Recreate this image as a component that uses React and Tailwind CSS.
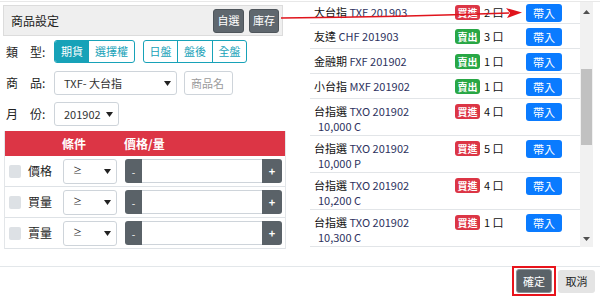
import React from 'react';

const rows = [
  { name: '大台指', code: 'TXF 201903', side: 'buy', qty: 2 },
  { name: '友達', code: 'CHF 201903', side: 'sell', qty: 3 },
  { name: '金融期', code: 'FXF 201902', side: 'sell', qty: 1 },
  { name: '小台指', code: 'MXF 201902', side: 'sell', qty: 1 },
  { name: '台指選', code: 'TXO 201902', sub: '10,000 C', side: 'buy', qty: 4 },
  { name: '台指選', code: 'TXO 201902', sub: '10,000 P', side: 'buy', qty: 5 },
  { name: '台指選', code: 'TXO 201902', sub: '10,200 C', side: 'buy', qty: 4 },
  { name: '台指選', code: 'TXO 201902', sub: '10,300 C', side: 'buy', qty: 1 },
];

function Caret() {
  return (
    <svg width="7" height="5" viewBox="0 0 7 5" className="shrink-0">
      <polygon points="0,0 7,0 3.5,5" fill="#222" />
    </svg>
  );
}

function Select({ value, className, small }) {
  return (
    <div className={`flex items-center justify-between h-full border border-[#ced4da] rounded-[3px] bg-white pl-[9px] pr-[5px] text-[#333] ${small ? 'text-[9px]' : 'text-[11px]'} ${className}`}>
      <span>{value}</span>
      <Caret />
    </div>
  );
}

function Condition({ label }) {
  return (
    <div className="flex items-center h-[31px] border-b border-[#dee2e6]">
      <div className="ml-[4px] w-[12px] h-[13px] rounded-[2px] bg-[#dde1e5]" />
      <div className="ml-[7px] w-[35px] text-[12px] text-[#222]">{label}</div>
      <div className="w-[54px] h-[25px]">
        <Select value="≥" small />
      </div>
      <div className="ml-[8px] w-[157px] h-[24px] flex">
        <div className="w-[17px] h-full bg-[#5a6268] rounded-l-[3px] text-white text-[10px] flex items-center justify-center">-</div>
        <div className="flex-1 h-full border-y border-[#ced4da] bg-white" />
        <div className="w-[20px] h-full bg-[#5a6268] rounded-r-[3px] text-white text-[11px] font-bold flex items-center justify-center">+</div>
      </div>
    </div>
  );
}

function ListRow({ r, first }) {
  const h = r.sub ? 'h-[37px]' : first ? 'h-[22px]' : 'h-[25px]';
  return (
    <div className={`flex items-start ${h} ${first ? 'pt-[3px]' : 'pt-[5px]'} pl-[4px] pr-[18px] border-b border-[#e2e5e8]`}>
      <div className="w-[141px] text-[11px] leading-[15px]">
        <div className="h-[15px]">
          <span className="text-[#111]">{r.name}</span>{' '}
          <span className="text-[#2e3360]">{r.code}</span>
        </div>
        {r.sub && <div className="h-[15px] pl-[4px] text-[#2e3360]">{r.sub}</div>}
      </div>
      <div className={`w-[25px] h-[15px] rounded-[3px] text-white text-[10px] font-bold leading-[15px] text-center ${r.side === 'buy' ? 'bg-[#dc3545]' : 'bg-[#28a745]'}`}>
        {r.side === 'buy' ? '買進' : '賣出'}
      </div>
      <div className="ml-[4px] text-[11px] leading-[15px] text-[#111]">{r.qty} 口</div>
      <div className="ml-auto -mt-[1px] w-[36px] h-[18px] rounded-[3px] bg-[#0a7bff] text-white text-[11px] leading-[18px] text-center">帶入</div>
    </div>
  );
}

export default function App() {
  return (
    <div className="relative w-[600px] h-[299px] bg-white overflow-hidden font-['Noto_Sans_CJK_TC','Noto_Sans',sans-serif] text-[#212529]">
      <div className="h-[1px] mt-[1px] bg-[#e8e8e8]" />
      <div className="flex h-[264px]">
        {/* left: 商品設定 */}
        <div className="w-[287px] pl-[3px] pt-[3px]">
          <div className="w-[280px] h-[31px] bg-[#efefef] border border-[#dcdcdc] flex items-center justify-between pl-[7px] pr-[3px]">
            <span className="text-[12px] text-[#222]">商品設定</span>
            <div className="flex gap-[5px]">
              <div className="w-[31px] h-[24px] rounded-[3px] bg-[#5f676e] border border-[#4e555b] text-white text-[11px] flex items-center justify-center">自選</div>
              <div className="w-[30px] h-[24px] rounded-[3px] bg-[#5f676e] border border-[#4e555b] text-white text-[11px] flex items-center justify-center">庫存</div>
            </div>
          </div>

          <div className="mt-[4px] h-[23px] flex items-center">
            <div className="ml-[3px] w-[48px] text-[12px] text-[#222]">類　型:</div>
            <div className="flex h-full rounded-[3px] border border-[#17a2b8] overflow-hidden text-[11px]">
              <div className="w-[34px] bg-[#17a2b8] text-white flex items-center justify-center">期貨</div>
              <div className="w-[45px] text-[#17a2b8] flex items-center justify-center">選擇權</div>
            </div>
            <div className="ml-[8px] flex h-full rounded-[3px] border border-[#17a2b8] overflow-hidden text-[11px] text-[#17a2b8]">
              <div className="w-[34px] flex items-center justify-center border-r border-[#17a2b8]">日盤</div>
              <div className="w-[35px] flex items-center justify-center border-r border-[#17a2b8]">盤後</div>
              <div className="w-[33px] flex items-center justify-center">全盤</div>
            </div>
          </div>

          <div className="mt-[8px] h-[24px] flex items-center">
            <div className="ml-[3px] w-[48px] text-[12px] text-[#222]">商　品:</div>
            <div className="w-[123px] h-full">
              <Select value="TXF- 大台指" />
            </div>
            <div className="ml-[7px] w-[49px] h-full border border-[#ced4da] rounded-[3px] pl-[6px] text-[11px] text-[#9a9a9a] flex items-center">商品名</div>
          </div>

          <div className="mt-[7px] h-[24px] flex items-center">
            <div className="ml-[3px] w-[48px] text-[12px] text-[#222]">月　份:</div>
            <div className="w-[65px] h-full">
              <Select value="201902" />
            </div>
          </div>

          <div className="mt-[5px] ml-[1px] w-[282px] border-x border-[#e3e6e9]">
            <div className="h-[25px] bg-[#dc3545] flex items-center text-white text-[12px] font-bold">
              <div className="w-[57px]" />
              <div className="w-[62px]">條件</div>
              <div>價格/量</div>
            </div>
            <Condition label="價格" />
            <Condition label="買量" />
            <Condition label="賣量" />
          </div>
        </div>

        {/* right: list */}
        <div className="ml-[23px] w-[283px] h-[245px] flex">
          <div className="w-[270px]">
            {rows.map((r, i) => (
              <ListRow key={i} r={r} first={i === 0} />
            ))}
          </div>
          <div className="w-[13px] h-full bg-[#f1f1f1] flex flex-col items-center">
            <svg width="7" height="4" viewBox="0 0 7 4" className="mt-[8px]">
              <polygon points="0,4 7,4 3.5,0" fill="#505050" />
            </svg>
            <div className="mt-[55px] w-[11px] h-[76px] bg-[#c1c1c1]" />
            <svg width="7" height="4" viewBox="0 0 7 4" className="mt-auto mb-[6px]">
              <polygon points="0,0 7,0 3.5,4" fill="#505050" />
            </svg>
          </div>
        </div>
      </div>

      {/* footer */}
      <div className="h-[33px] border-t border-[#e3e7ea] flex items-start justify-end pr-[5px]">
        <div className="-mt-[1px] w-[44px] h-[30px] border-2 border-[#e8141c] flex items-center justify-center">
          <div className="w-[36px] h-[24px] rounded-[3px] bg-[#5a6268] border border-[#8c9399] text-white text-[11px] flex items-center justify-center">確定</div>
        </div>
        <div className="ml-[2px] mt-[3px] w-[37px] h-[23px] rounded-[3px] bg-[#e4e4e4] text-[#222] text-[11px] flex items-center justify-center">取消</div>
      </div>

      {/* annotation arrow */}
      <svg className="absolute left-0 top-0 pointer-events-none" width="600" height="299" viewBox="0 0 600 299">
        <path d="M281 18 Q400 17 509 13" stroke="#e0141c" strokeWidth="1.6" fill="none" />
        <polygon points="506,8 522,12.5 507,18 510,13" fill="#e0141c" />
      </svg>
    </div>
  );
}
